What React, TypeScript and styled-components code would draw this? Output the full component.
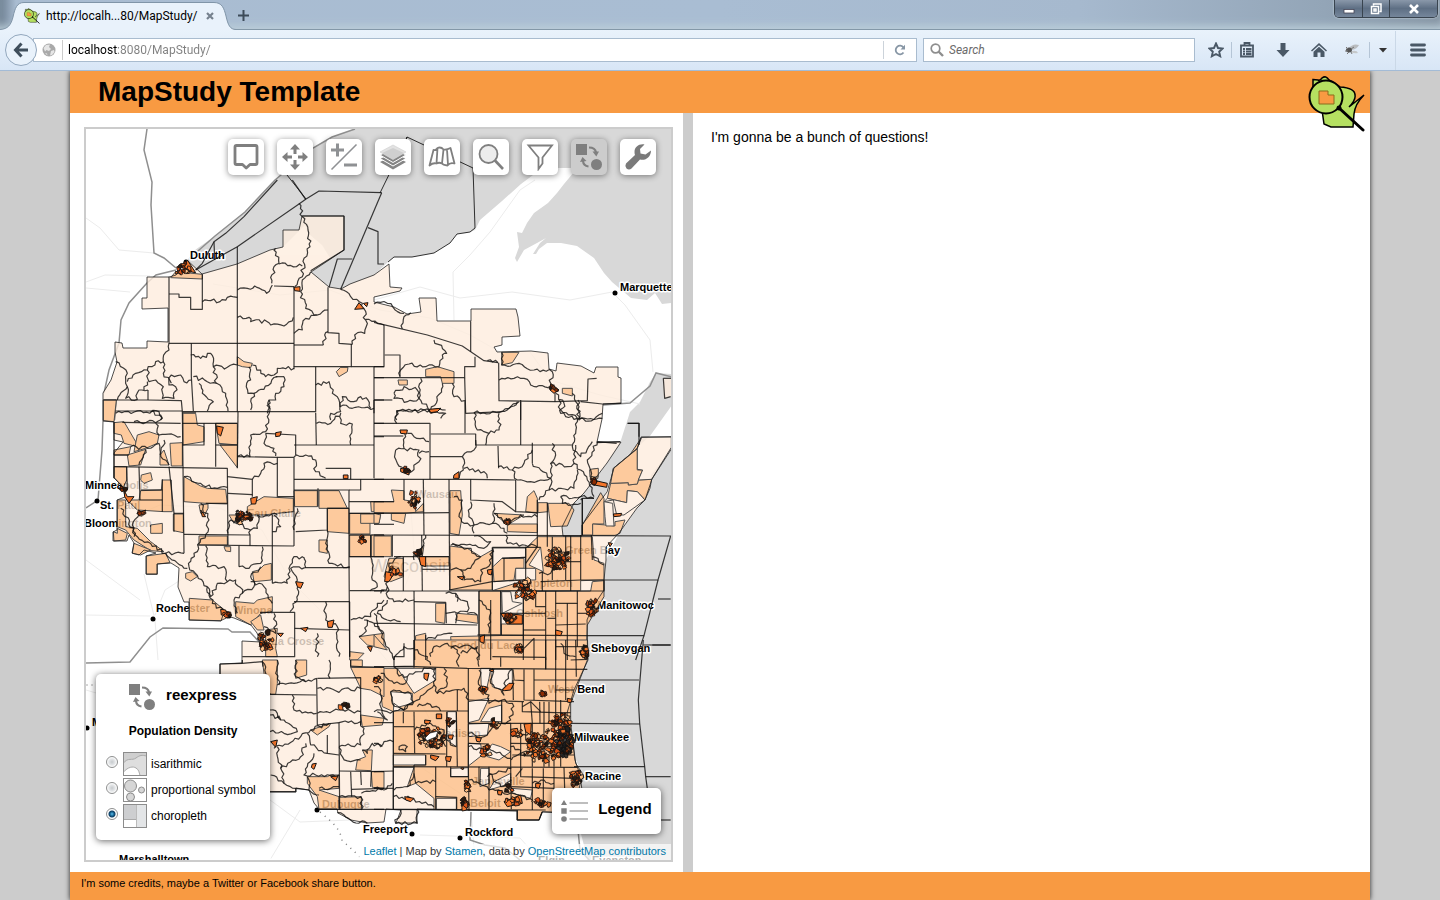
import React from "react";
import styled, { createGlobalStyle } from "styled-components";

const GlobalStyle = createGlobalStyle`
  * { box-sizing: border-box; }
  html, body { margin: 0; padding: 0; }
  body { background: #ccc; color: #000; font-family: Arial, "Liberation Sans", sans-serif; font-size: 14px; }
  button, input { font: inherit; margin: 0; }
  button { padding: 0; border: 0; background: none; cursor: pointer; }
`;

const sans = `"Liberation Sans", Arial, sans-serif`;
const chromeSans = `Roboto, "Open Sans", sans-serif`;

/* ---------- browser window ---------- */

const Screen = styled.div`
  min-height: 100vh;
  display: flex;
  flex-direction: column;
  font-family: ${sans};
`;

const TabStrip = styled.div`
  height: 30px;
  display: flex;
  align-items: stretch;
  justify-content: space-between;
  background: linear-gradient(to right, #6d7f91 0, #a9bcd1 16px, #a9bdd3 50%, #a6b9ce 75%, #93a5b7 92%, #8594a3 100%);
  box-shadow: inset 0 -1px 0 #8398a8, inset 0 -8px 8px -4px #bccfd9;
`;

const TabGroup = styled.div`
  display: flex;
  align-items: stretch;
`;

const Tab = styled.div`
  position: relative;
  width: 236px;
  padding: 2px 20px 0 24px;
  display: flex;
  align-items: center;
  gap: 6px;
  font-family: ${chromeSans};
  font-size: 12px;
`;

const TabShape = styled.svg`
  position: absolute;
  inset: 0;
`;

const TabTitle = styled.span`
  position: relative;
  flex: 1;
  white-space: nowrap;
`;

const TabIcon = styled.svg`
  position: relative;
  flex: none;
`;

const TabClose = styled.button`
  position: relative;
  width: 12px;
  height: 16px;
  display: grid;
  place-items: center;
`;

const NewTab = styled.button`
  width: 14px;
  display: grid;
  place-items: center;
`;

const WindowControls = styled.div`
  height: 18px;
  margin-right: 2px;
  display: flex;
  border: 1px solid #39444f;
  border-top: 0;
  border-radius: 0 0 5px 5px;
  overflow: hidden;
  box-shadow: 0 0 2px #dbe6f0;
`;

const WindowButton = styled.button<{ $wide?: boolean }>`
  width: ${(p) => (p.$wide ? 48 : 27)}px;
  display: grid;
  place-items: center;
  background: linear-gradient(#8a98aa, #5e6f84 50%, #75869b);
  & + & { border-left: 1px solid #39444f; }
`;

const NavBar = styled.div`
  height: 41px;
  padding-left: 5px;
  display: flex;
  align-items: center;
  background: linear-gradient(#e9f2fb, #d8e6f6);
  border-bottom: 1px solid #a3bbd6;
`;

const BackButton = styled.button`
  position: relative;
  z-index: 1;
  width: 32px;
  height: 32px;
  flex: none;
  display: grid;
  place-items: center;
  border: 1px solid #92a7bd;
  border-radius: 50%;
  background: #e9f2fb;
`;

const Field = styled.div<{ $grow?: boolean }>`
  height: 24px;
  flex: ${(p) => (p.$grow ? "1 1 0" : "0 1 272px")};
  margin-left: ${(p) => (p.$grow ? -4 : 6)}px;
  padding-left: ${(p) => (p.$grow ? 8 : 6)}px;
  min-width: 0;
  display: flex;
  align-items: center;
  border: 1px solid #a9bccf;
  background: #fff;
`;

const AddressInput = styled.input`
  flex: 1;
  min-width: 0;
  height: 20px;
  margin-left: 6px;
  padding: 0 0 0 5px;
  border: 0;
  border-left: 1px solid #ccc;
  outline: 0;
  font-family: ${chromeSans};
  font-size: 12px;
  color: #808080;
  -webkit-text-fill-color: transparent;
  background: linear-gradient(to right, #000 54px, #808080 54px);
  background-clip: text;
  -webkit-background-clip: text;
`;

const Reload = styled.button`
  width: 33px;
  height: 18px;
  display: grid;
  place-items: center;
  border-left: 1px solid #ccd3da;
`;

const SearchInput = styled.input`
  flex: 1;
  min-width: 0;
  padding: 0 5px;
  border: 0;
  outline: 0;
  font-family: ${chromeSans};
  font-size: 12px;
  font-style: italic;
  background: transparent;
  &::placeholder { color: #6b6b6b; opacity: 1; }
`;

const NavButtons = styled.div`
  margin-left: 6px;
  display: flex;
  align-items: center;
`;

const NavButton = styled.button<{ $w: number; $rule?: number }>`
  width: ${(p) => p.$w}px;
  height: ${(p) => p.$rule ?? 18}px;
  flex: none;
  display: grid;
  place-items: center;
  border-right: ${(p) => (p.$rule ? `1px solid ${p.$rule > 20 ? "#cad8e7" : "#b5c5d6"}` : "0")};
`;

/* ---------- study page ---------- */

const Page = styled.div`
  flex: 1;
  margin: 0 70px;
  display: flex;
  flex-direction: column;
  background: #fff;
  box-shadow: 0 0 5px #222;
  clip-path: inset(0 -8px);
`;

const Header = styled.header`
  height: 42px;
  padding: 0 4px 0 28px;
  display: flex;
  align-items: flex-start;
  justify-content: space-between;
  background: #f89a42;
`;

const Title = styled.h1`
  margin: 0;
  font-size: 28px;
  line-height: 42px;
`;

const Logo = styled.svg`
  position: relative;
  z-index: 1;
  margin-top: 5px;
`;

const Main = styled.main`
  flex: 1;
  display: grid;
  grid-template-columns: minmax(0, 613fr) 10px minmax(0, 677fr);
`;

const MapPane = styled.section`
  padding: 14px 10px 10px 14px;
  display: flex;
`;

const Divider = styled.div`
  background: #ccc;
`;

const Questions = styled.section`
  padding: 16px 18px;
  line-height: 16px;
  p { margin: 0; }
`;

const Footer = styled.footer`
  height: 28px;
  padding: 0 11px;
  font-size: 11px;
  line-height: 23px;
  background: #f89a42;
`;

const MapFrame = styled.div`
  position: relative;
  flex: 1;
  min-height: 735px;
  border: 2px solid #ccc;
  overflow: hidden;
`;

const MapCanvas = styled.svg`
  position: absolute;
  inset: 0;
  width: 100%;
  height: 100%;
  display: block;
`;

const Toolbar = styled.div`
  position: absolute;
  top: 10px;
  right: 15px;
  display: flex;
  gap: 13px;
`;

const Tool = styled.button<{ $active?: boolean }>`
  width: 36px;
  height: 36px;
  display: grid;
  place-items: center;
  border-radius: 5px;
  background: ${(p) => (p.$active ? "#ccc" : "#fff")};
  box-shadow: 0 1px 6px rgba(0, 0, 0, 0.45);
`;

const Panel = styled.form`
  position: absolute;
  left: 10px;
  bottom: 20px;
  width: 174px;
  height: 166px;
  padding: 10px;
  border-radius: 5px;
  background: #fff;
  box-shadow: 0 1px 7px rgba(0, 0, 0, 0.6);
`;

const PanelHead = styled.div`
  display: flex;
  justify-content: center;
  gap: 10px;
`;

const PanelTitle = styled.h2`
  margin: 0;
  font-size: 15px;
  line-height: 22px;
`;

const PanelSubtitle = styled.h3`
  margin: 12px 0;
  text-align: center;
  font-size: 12px;
  line-height: 16px;
`;

const Option = styled.label`
  height: 26px;
  display: flex;
  align-items: center;
  gap: 4px;
  font-size: 12px;
  white-space: nowrap;
`;

const Radio = styled.input`
  appearance: none;
  width: 12px;
  height: 12px;
  margin: 0 1px 4px 0;
  flex: none;
  border: 1px solid #8e8f8f;
  border-radius: 50%;
  background: radial-gradient(circle, #c6cacd 0, #e3e5e7 3px, #fff 5px);
  &:checked { background: radial-gradient(circle, #5fc0ee 0, #14618f 2px, #113f63 3px, #fff 4px); }
`;

const LegendButton = styled.button`
  position: absolute;
  right: 10px;
  bottom: 26px;
  width: 109px;
  height: 46px;
  display: flex;
  align-items: center;
  justify-content: center;
  gap: 10px;
  border-radius: 5px;
  background: #fff;
  box-shadow: 0 1px 7px rgba(0, 0, 0, 0.6);
  font-size: 15px;
  font-weight: bold;
  line-height: 20px;
  span { padding-bottom: 4px; }
`;

const Attribution = styled.div`
  position: absolute;
  right: 0;
  bottom: 0;
  padding: 0 5px 2px;
  background: rgba(255, 255, 255, 0.7);
  color: #333;
  font-size: 11px;
  line-height: 14px;
  white-space: nowrap;
  a { color: #0078a8; text-decoration: none; }
`;

/* ---------- map geometry ---------- */

const LIGHT = "#feedde";
const MID = "#fdbe85";
const HOT = "#f3762c";

function random(seed: number) {
  let s = seed;
  return () => {
    s = (s * 16807) % 2147483647;
    return s / 2147483647;
  };
}

function points(text: string): [number, number][] {
  const n = text.trim().split(/\s+/).map(Number);
  const out: [number, number][] = [];
  for (let i = 0; i + 1 < n.length; i += 2) out.push([n[i], n[i + 1]]);
  return out;
}

function line(text: string) {
  return "M" + points(text).map((p) => p.join(" ")).join("L");
}

/* A river-like boundary: every leg is broken into short uneven steps. */
function wavy(text: string) {
  const p = points(text);
  const rnd = random(Math.round(p[0][0] * 31 + p[0][1] * 17 + p.length) + 7);
  let d = `M${p[0][0]} ${p[0][1]}`;
  for (let i = 1; i < p.length; i++) {
    const [x0, y0] = p[i - 1];
    const [x1, y1] = p[i];
    const len = Math.hypot(x1 - x0, y1 - y0);
    const steps = Math.max(1, Math.round(len / 9));
    for (let k = 1; k < steps; k++) {
      const t = k / steps;
      const off = (rnd() - 0.5) * 12;
      d += `L${(x0 + (x1 - x0) * t - ((y1 - y0) / len) * off).toFixed(1)} ${(y0 + (y1 - y0) * t + ((x1 - x0) / len) * off).toFixed(1)}`;
    }
    d += `L${x1} ${y1}`;
  }
  return d;
}

type Cluster = [cx: number, cy: number, rx: number, ry: number, count: number];

interface Sheet {
  x: number;
  y: number;
  straight: string[];
  rough: string[];
  mid: string[];
  light?: string[];
  hot: string[];
  cities: Cluster[];
}

const sheets: Sheet[] = [
  {
    x: 84, y: 180,
    straight: [
      "255 290 255 490 460 490 630 490", "630 495 718 495", "460 200 460 695", "630 320 630 560",
      "355 283 355 388 320 388 320 352 285 352 285 342 255 342", "570 318 630 320",
      "732 322 732 458 765 460 765 490 805 493", "802 493 802 560 630 560 630 568", "802 560 900 560",
      "322 490 322 590 328 693", "58 660 190 660 292 662 295 695 460 695 695 695 695 560", "95 693 295 693",
      "870 560 870 700", "870 593 900 593", "870 660 900 660", "192 660 192 630", "600 590 575 590",
      "335 270 460 200 645 72", "625 0 665 58 705 33 893 38", "893 38 770 328", "852 143 882 155 882 252 900 252",
      "735 322 760 237 805 237", "390 185 392 240", "645 72 665 58", "335 270 355 250 390 185 425 160 480 110 580 0",
      "655 108 780 108 780 210 680 272",
    ],
    rough: [
      "355 365 380 362 408 365 430 352 460 352", "460 330 490 325 512 318 548 340 565 315",
      "460 412 495 412 500 425 550 425 560 435 600 438 628 412", "575 205 570 210 585 250 570 260 563 310",
      "585 252 655 258", "645 70 655 110 672 150 678 200 660 235 655 290 632 320",
      "680 275 655 300 650 335 665 385 700 405 732 390", "630 460 655 450 665 415 700 405",
      "718 495 722 465 732 455", "770 328 800 350 835 370 845 420 842 460 812 465 805 493", "845 418 900 435",
      "320 525 350 535 380 520 388 560 430 562 460 555", "388 560 398 610 370 605 328 590",
      "398 610 425 640 432 693", "345 610 355 640 388 665 370 693", "95 545 130 580 130 620 100 660",
      "130 605 155 580 190 570 215 545 238 545 255 490", "130 620 125 655 160 658 165 630 192 630",
      "190 570 195 605 215 600 238 620 235 655 270 655 275 620 255 615 262 585 290 585 300 605 322 600",
      "238 545 238 580 262 610", "190 605 180 630", "505 555 530 570 545 590 570 585 580 565 630 565",
      "495 560 500 600 488 610 492 640 510 640 540 628 580 590", "600 590 600 620 575 640 575 660 555 660 550 700",
      "510 640 500 690", "695 615 735 605 745 640 760 650 768 680 870 685",
      "768 680 775 650 800 665 830 650 852 660 860 685", "740 720 740 700 770 695 768 680", "200 695 230 705 230 720",
    ],
    mid: [
      "460 530 480 545 505 550 500 563 475 560 460 555", "58 660 97 660 92 720 58 720", "297 697 335 697 325 720 297 720",
      "757 575 770 562 792 562 790 575 765 590", "275 275 355 283 355 297 260 293",
    ],
    hot: ["310 240 335 278 318 275 300 262", "630 322 648 320 648 334 632 332", "825 368 840 386 812 388", "838 370 852 368 848 380"],
    cities: [[300, 270, 26, 18, 16]],
  },
  {
    x: 374, y: 180,
    straight: [
      "0 427 160 465 265 498 330 542 372 548", "374 548 375 662 543 665 640 662 642 597 668 595", "543 665 543 640",
      "290 424 290 515", "30 435 30 560 0 560", "32 525 78 525 78 590", "0 593 272 593 272 560 303 560 303 530",
      "272 593 275 700 385 695", "440 665 440 720", "0 660 55 660", "620 665 685 672 742 670", "868 595 895 595", "868 595 872 655 890 650",
    ],
    rough: [
      "0 372 40 370 90 400", "85 447 90 410 110 398", "78 590 80 570 105 552 155 560 195 560 205 525 218 520 180 480",
      "383 517 383 555 435 550 480 570 535 575 530 610", "375 600 420 595 460 598 470 615 530 618", "340 542 372 548",
      "385 695 405 685 435 665", "545 640 570 670 560 700 610 715", "595 640 615 680 612 718", "610 718 660 718 685 700",
      "235 610 240 650 272 662", "205 610 190 660 170 690", "140 595 135 655 165 690",
      "60 640 90 620 130 630 135 655 100 665 60 655 60 640", "68 720 68 692 150 690 215 700 200 715",
    ],
    mid: [
      "383 517 435 517 415 548 383 555", "155 568 190 560 240 575 240 610 205 610 200 590 155 590", "72 600 100 600 100 615 75 615",
      "565 625 595 625 595 648 565 640",
    ],
    hot: ["530 610 555 630 540 640 528 630", "165 690 200 685 190 695 170 700"],
    cities: [[538, 625, 10, 10, 5]],
  },
  {
    x: 84, y: 400,
    straight: [
      "295 35 297 200 300 460", "90 200 430 205 432 435", "462 35 460 205", "695 38 697 135", "635 165 635 105 545 100",
      "460 170 580 172 580 290 630 290", "580 172 630 172 630 438", "630 135 870 135", "870 0 870 235", "870 70 900 70", "870 110 900 110",
      "630 238 900 238", "630 270 795 270 795 470 797 770", "795 305 900 305", "795 340 900 340", "795 405 900 405", "795 470 900 470",
      "300 403 498 405 498 437", "340 435 630 438", "565 345 565 550", "465 437 465 500", "662 503 797 503", "630 605 797 605",
      "797 572 900 572", "635 395 730 390 730 325 795 325", "528 637 632 637 632 770 475 770", "115 67 290 70", "90 65 90 235",
      "295 70 460 70", "360 70 360 135 295 135", "395 70 395 200", "395 135 460 135", "235 238 235 335", "170 270 235 270",
      "165 300 235 300", "255 200 270 340 270 395", "270 340 300 340", "128 200 130 270", "365 310 430 310", "430 230 505 238 505 290",
      "432 280 505 284", "725 205 800 205 800 238", "830 238 830 270 795 270", "702 265 702 320", "860 405 860 470", "90 165 135 165",
      "165 200 168 300", "797 605 797 770", "632 685 797 690",
    ],
    rough: [
      "555 0 550 50 545 95 500 105 498 170 462 168", "545 100 540 130 570 145 575 168", "630 170 665 165 695 180 695 215 725 235",
      "697 70 740 70 770 40 770 70 805 72 800 135", "95 40 225 35 235 55 215 68 150 65", "505 238 530 220 540 190 580 190",
      "300 230 350 250 400 265 430 262", "350 310 375 360 365 403", "365 403 330 460 315 500 370 560",
      "365 437 370 500 420 500 430 545 400 550 380 590 370 560", "430 545 455 540 475 580 450 600 460 640",
      "475 580 510 560 500 530 530 500", "465 500 495 505 530 490 535 440", "500 545 540 560 565 610", "565 550 610 550 615 505 630 470 662 475",
      "662 503 620 505 640 540 640 600 618 635", "660 475 665 503", "730 390 725 430 735 490 797 500", "860 470 865 540 880 560 858 572",
      "800 660 860 650 880 610 900 600", "725 605 725 660 760 680 765 770", "700 700 700 770", "370 560 385 610 430 640",
      "165 330 145 375 150 410", "110 325 160 410 245 460 310 505", "245 460 300 460", "640 325 630 390", "500 390 520 385 520 345 580 345",
      "432 400 440 360 500 390 498 405", "570 345 590 380 565 395", "570 640 575 700 540 680", "215 70 225 105 290 110", "140 140 190 145 225 130 228 165",
      "185 148 165 195", "240 120 230 160 255 195", "840 660 870 670 900 700", "850 660 840 700 825 710",
    ],
    mid: [
      "58 0 97 0 90 65 58 62", "90 68 120 65 155 125 160 140 120 130 112 105 90 100", "150 155 185 145 220 130 225 105 195 95 160 105",
      "90 150 140 140 135 165 90 165", "130 165 185 148 170 195 135 198", "90 200 128 200 128 240 118 262 90 232",
      "297 40 335 40 340 75 360 80 360 125 297 135", "395 70 460 70 460 135 405 130", "408 135 460 135 460 203", "228 165 240 150 255 195 228 195",
      "258 130 295 128 295 198 262 198", "172 225 200 218 205 240 180 250 170 240",
      "170 272 232 270 235 240 262 240 265 335 240 335 160 330 130 300 165 300", "300 230 350 258 370 265 425 268 430 312 365 310 300 305",
      "345 315 372 312 372 325 362 345 350 340", "345 408 430 408 430 435 345 435", "268 342 298 342 298 398 268 392",
      "100 300 125 300 125 380 160 385 200 425 240 455 200 452 150 420 125 390 100 380", "100 385 130 400 125 420 90 423 88 395 100 400",
      "150 430 200 450 170 465 145 460", "187 468 245 460 258 488 220 492 220 523 187 523", "305 520 325 515 340 530 320 543 305 535",
      "316 595 385 600 415 625 440 648 410 662 316 660", "455 605 510 610 520 600 565 590 565 635 530 640 500 675 455 650",
      "505 515 525 510 540 495 562 490 562 540 510 545", "420 440 440 440 440 455 425 453", "630 272 700 272 700 320 632 320",
      "705 272 765 272 790 325 705 325", "730 325 795 325 795 400 730 395", "705 420 730 420 730 460 705 455",
      "490 320 540 290 628 295 628 335 580 340 540 345 490 345", "435 345 460 345 450 370", "797 340 858 340 858 402 797 402",
      "830 342 890 342 885 370 830 370", "860 305 900 305 900 335 862 335", "797 405 860 405 860 470 797 470", "862 405 900 405 900 470 862 470",
      "825 710 900 700 900 745 850 735", "797 755 840 760 820 780 797 780", "545 690 580 685 575 745 580 770 545 770",
      "500 665 530 645 540 690 520 690", "200 375 235 370 235 400 200 400",
    ],
    hot: [
      "398 78 418 82 410 108 400 100", "575 98 592 95 588 108 575 110", "120 270 130 290 150 290 135 310 122 290", "160 340 185 330 180 345",
      "778 225 792 225 792 236 778 236", "500 295 520 290 515 312 502 312", "635 545 658 548 650 565 640 560", "350 330 365 350 355 350",
      "410 628 425 630 430 645 412 645", "730 665 750 660 745 682 732 682", "650 685 672 682 665 695", "580 700 598 700 590 710", "850 740 865 740 860 755",
    ],
    cities: [[478, 350, 30, 22, 26], [545, 728, 22, 34, 34], [835, 416, 9, 12, 8], [118, 268, 12, 10, 6], [172, 338, 12, 6, 5], [430, 642, 12, 8, 8]],
  },
  {
    x: 374, y: 400,
    straight: [
      "0 70 168 70 168 238", "170 102 305 102 305 135 595 135", "0 108 88 108", "168 170 265 170", "273 0 273 100", "440 0 440 135", "372 138 374 205",
      "0 238 290 238 425 240", "290 238 290 300 385 305 425 335", "90 238 90 300", "148 238 150 405", "225 238 227 570", "425 240 425 335 490 338",
      "0 340 225 338", "0 373 60 373", "0 405 890 408 852 540 690 540", "490 300 490 440", "0 305 60 305", "475 128 475 190", "355 442 500 442", "385 475 455 472",
      "0 573 690 573 690 540", "620 405 620 540 690 540", "500 545 620 540", "545 573 545 780", "515 573 515 780", "448 573 448 780",
      "315 573 315 780", "120 573 122 780", "0 670 60 670 310 675", "310 705 635 707 810 707 852 540", "810 707 785 780", "382 640 448 640",
      "380 573 382 705", "448 690 515 690", "60 470 225 470", "55 405 55 470", "143 405 145 573", "88 470 88 573", "120 605 215 607 217 670",
      "545 675 635 672", "485 573 485 620 515 620", "580 610 580 780", "545 610 610 610 610 573", "610 610 610 740", "450 745 480 715 480 780", "590 408 590 573",
      "390 475 390 540", "225 570 355 545 450 540", "355 442 355 570", "350 600 350 780", "155 705 155 780", "610 640 640 640",
      "652 405 655 480", "625 295 625 405", "762 70 795 70 795 110",
      "852 597 890 597", "835 735 890 735", "145 508 225 508", "520 308 520 440", "535 410 535 540", "575 408 575 540", "455 440 455 573", "505 515 505 573",
      "490 440 455 490", "560 485 620 485", "450 640 515 640", "520 655 545 655", "545 740 635 740", "670 125 728 130",
      "620 300 625 295 660 295",
    ],
    rough: [
      "555 0 560 30 610 55 605 100 595 140 620 170 655 125", "612 0 615 60 685 55", "670 125 640 180 650 230", "265 170 300 150 305 120",
      "265 170 268 210 255 235", "270 205 330 215 340 235", "415 210 430 240 470 245 500 240 530 235 500 210 475 190",
      "372 200 415 210 450 190 475 150", "535 130 545 165 530 190 580 200 600 190 605 135", "530 190 530 235 525 270 495 300",
      "525 270 600 265 610 210", "600 190 620 210 640 240 660 290", "560 290 620 290 660 295", "560 290 565 310 620 310",
      "240 290 265 300 255 350 270 370 300 375 300 400", "290 305 285 340 300 375 355 370 360 310", "360 340 400 370 440 345 490 350",
      "300 38 310 90 345 100 335 135", "300 38 375 38 405 25 430 5", "345 100 375 90 375 40", "65 150 135 150 135 185 105 220 70 190 65 150",
      "80 95 95 110 90 145", "68 70 68 35 215 30", "100 100 120 110 165 125", "135 160 165 155", "20 580 40 560 45 490 80 470", "40 600 10 640 40 660 80 665",
      "40 560 40 590 60 605 120 600", "120 480 125 460 150 430 155 405", "230 435 280 445 320 470 290 505 230 510",
      "260 510 270 540 320 545 320 510 350 490 355 445", "300 408 350 425 330 445 235 430", "395 405 400 430 490 440",
      "215 580 245 580 260 600 280 605 280 635 250 640 215 640", "280 640 310 645", "245 580 250 605", "245 640 245 670", "155 720 200 705 235 700",
      "60 780 90 740 120 745", "230 745 280 735 310 745", "655 470 690 495", "0 640 30 720 60 780", "355 370 390 385 400 400",
      "495 520 530 520 560 500", "315 600 350 640 345 700",
    ],
    mid: [
      "228 272 260 272 265 345 255 405 228 400", "455 335 460 290 480 272 490 295 490 340", "525 340 522 310 585 310 600 330 580 378 530 380",
      "492 308 520 308 522 335 492 338", "360 340 450 345 400 375", "400 372 490 372 490 398 400 395",
      "647 210 670 205 672 235 650 235",
      "52 270 90 272 90 300 125 305 125 335 148 310 148 335 90 340 0 338 0 305 60 305", "52 340 95 340 90 370 52 360", "0 340 20 345 15 370 0 370",
      "0 408 52 408 52 470 0 470", "125 460 150 435 145 470 225 470 225 498 145 498", "45 475 88 475 88 530 50 545 30 530",
      "228 438 280 445 320 470 355 450 355 570 228 570", "355 475 450 475 450 505 425 505 420 540 360 545",
      "492 410 655 410 660 480 690 490 690 540 620 542 620 572 355 572 455 540 455 445", "315 573 380 573 380 705 315 705",
      "448 575 650 573 655 545 690 542 690 590 640 675 635 780 448 780", "185 610 215 610 212 670 185 665", "250 640 310 645 312 670 245 660",
      "125 707 155 700 155 780 122 780", "230 710 448 705 448 780 235 780", "382 672 448 672 448 706 382 706", "0 705 40 750 0 740", "160 750 220 735 225 780 160 780",
    ],
    light: ["465 495 500 442 508 515", "383 575 410 575 415 605 445 610 385 640", "425 505 485 505 485 540 425 540", "357 444 455 444 455 472 385 474 357 500"],
    hot: [
      "380 640 445 645 445 672 400 672", "340 510 355 508 352 525 342 522",
      "80 205 105 210 105 225 80 215", "390 360 410 362 405 375 390 370", "135 470 155 470 155 500 140 495", "35 515 60 520 45 545 32 545",
      "545 690 565 695 560 707 545 705", "318 710 332 705 330 730 318 725", "165 28 200 25 190 35 170 38",
      "78 90 100 90 98 102 80 100", "250 530 270 530 265 540", "240 225 255 215 255 235 238 235",
    ],
    cities: [
      [120, 302, 16, 28, 26], [548, 475, 36, 34, 60], [452, 570, 34, 30, 56], [408, 657, 16, 12, 22], [652, 622, 20, 24, 24], [62, 512, 20, 16, 12],
      [435, 747, 10, 12, 12], [630, 762, 10, 18, 16], [400, 365, 10, 8, 8], [130, 462, 10, 10, 6], [95, 212, 14, 8, 7],
    ],
  },
  {
    x: 374, y: 640,
    straight: [
      "0 80 125 80 280 85 640 88", "120 0 120 78 60 80 60 50 90 50 90 10", "355 50 515 52 515 88", "380 52 380 80", "450 88 450 180 600 185", "480 88 480 180", "515 0 515 88",
      "545 0 545 250", "575 0 575 180", "605 0 607 110", "480 120 795 120", "808 0 793 180 797 250 812 380 815 410 822 460", "808 15 890 15",
      "815 410 890 410", "590 250 797 252", "600 380 812 380", "283 85 283 380 285 512", "90 213 283 213", "283 180 450 185",
      "383 180 383 250 410 250 410 380", "0 248 58 248 58 508", "58 213 58 250", "58 340 215 342", "58 380 610 382", "120 215 122 340",
      "88 215 88 250", "218 215 218 380", "247 215 250 380", "0 395 58 393", "155 345 155 375 120 375", "0 508 515 510", "185 380 185 508",
      "185 470 248 472 248 508", "230 380 230 410 283 410", "120 375 120 400 125 430", "345 380 345 510", "315 380 315 430", "410 380 412 508",
      "440 250 440 410 600 415", "475 385 475 510", "508 385 508 480", "540 382 540 480", "570 382 572 445", "283 250 590 250", "475 250 475 380",
      "510 185 510 380", "410 310 600 312", "412 440 540 445", "445 185 445 215 545 218", "415 345 600 345", "545 218 590 218", "250 150 250 213",
      "430 510 430 540 495 540 505 515", "60 260 120 260", "183 300 215 300", "545 150 600 150", "825 540 890 540", "0 445 58 445", "283 310 345 312",
      "417 88 420 120 450 122", "417 120 418 180", "497 185 498 250", "525 185 525 250", "445 200 470 185 500 215", "470 185 475 250", "560 180 560 250",
      "590 60 640 58", "485 320 540 320 540 380", "455 250 455 300", "525 345 525 380", "560 345 560 380", "425 410 445 385",
    ],
    rough: [
      "60 80 70 100 100 110 95 130", "100 110 160 85 185 85 180 135 120 185 90 210", "210 85 220 130 190 160 180 135", "190 160 270 145 283 180",
      "0 215 40 215 90 210", "0 140 20 150 20 200 40 240 10 215", "50 155 110 160 118 185 90 210 55 190 50 155",
      "315 90 320 140 345 165 345 190 383 180",
      "355 85 350 130 390 165 390 130 415 88", "383 180 415 190 410 240 383 250",
      "120 30 160 50 170 75", "170 50 180 20 220 10 250 30 255 80", "260 40 310 20 315 80", "283 320 350 330 410 355",
      "283 280 330 290 350 270 383 250", "0 310 20 320 30 305 58 305", "60 450 100 440 120 400", "125 430 185 425", "0 445 30 450 55 430",
      "58 470 110 475 180 500", "345 400 380 440 412 420", "285 420 315 430 345 450", "345 450 420 460 475 480", "340 410 412 385",
      "218 300 247 320", "75 330 85 315 100 320 95 335 75 330", "122 270 160 250 210 270 215 320",
      "410 280 440 290 475 275", "412 360 440 340 475 330", "475 430 510 420 540 430", "20 100 60 130 95 130",
      "130 200 160 190 200 213", "80 510 65 550 130 550 130 508", "560 10 570 40 605 50", "410 320 440 330 440 345 480 350",
    ],
    mid: [
      "120 0 640 0 640 60 590 190 590 250 605 370 625 400 600 520 505 515 495 540 430 540 430 512 58 508 58 215 25 200 20 150 0 140 0 85 120 85",
    ],
    light: [
      "320 85 350 85 345 115 335 160 322 150", "350 88 415 88 415 145 385 150 355 140", "283 185 345 175 315 240 283 248", "320 245 345 205 383 195 383 245",
      "335 335 355 312 380 320 410 335 375 360 340 350",
      "412 445 475 450 470 475 415 460", "345 450 360 425 410 400 410 430", "220 215 247 215 247 320 218 300", "230 385 283 383 283 410 230 410",
      "58 345 155 345 155 375 58 375", "187 475 247 475 247 508 187 508", "58 382 120 382 100 440 125 430 180 475 180 508 58 508",
      "70 85 185 85 185 120 120 160 100 130", "50 155 115 160 115 190 60 205", "283 252 345 250 340 285 283 290",
      "283 310 320 312 325 345 283 378", "160 290 175 278 190 285 178 298", "60 190 90 212 58 213", "320 385 345 385 345 430 318 440",
    ],
    hot: [
      "150 100 165 100 160 122 150 115", "92 470 120 475 110 485 95 480", "187 222 203 222 203 236 187 236", "152 240 170 242 165 252 152 250",
      "222 285 238 285 235 298 224 296", "215 350 232 350 228 365 216 362", "170 345 195 350 185 362 170 355", "370 452 385 452 382 465 372 464",
      "0 112 20 115 15 125 0 122", "485 430 500 430 495 445 485 442", "390 485 440 465 445 490 400 500", "580 175 595 178 590 188 580 186",
      "345 90 360 88 355 96", "260 384 270 384 266 390", "305 292 322 294 318 306 308 304", "450 252 472 250 470 285 455 275",
      "410 268 430 265 435 285 415 290", "385 150 405 130 420 130 410 150 392 152",
    ],
    cities: [
      [555, 290, 40, 64, 90], [572, 305, 24, 44, 190], [490, 312, 34, 34, 56], [500, 345, 60, 24, 30], [606, 415, 18, 24, 40], [172, 292, 42, 34, 90], [228, 248, 14, 10, 8],
      [279, 437, 12, 14, 14], [274, 490, 10, 16, 16], [326, 150, 9, 11, 10], [505, 160, 10, 9, 10], [435, 26, 10, 12, 14], [360, 252, 14, 14, 12],
      [335, 335, 14, 20, 12], [420, 484, 26, 12, 14], [500, 490, 30, 12, 16], [630, 38, 10, 18, 18], [565, 238, 26, 20, 20], [430, 280, 18, 14, 8], [406, 446, 12, 12, 6],
    ],
  },
  {
    x: 84, y: 660,
    straight: [
      "475 10 408 12 408 60", "475 0 475 10 535 5 537 20", "558 103 697 105", "698 55 700 195 765 188 767 450", "700 55 830 53 830 195", "800 0 800 20 900 22",
      "765 333 900 335", "800 335 803 410", "830 335 832 375", "862 335 860 380", "730 225 730 280 765 285", "803 388 900 385",
      "558 395 635 395 635 385 675 390", "705 448 900 448",
    ],
    rough: [
      "580 75 630 70 665 65 698 55", "535 5 545 40 558 103", "580 0 575 40 585 75", "635 0 635 50 665 65", "735 0 738 55", "625 105 630 150 698 160", "700 160 765 150 830 155",
      "700 85 755 92 830 85", "558 165 600 180 640 215 600 220 558 215", "570 265 650 230 680 210 735 190", "670 220 680 255 730 280",
      "590 325 650 290 665 250", "580 260 590 325 600 370 635 385", "690 280 670 320 660 345 765 345", "765 260 830 255 840 205 830 185 765 188",
      "835 270 850 280 865 250 895 260", "765 262 775 290 800 305 830 300", "560 345 600 370", "765 410 830 410 832 450", "832 400 900 385",
      "670 350 675 390 705 405", "705 385 765 380", "760 458 780 465 800 480 850 490", "558 150 580 160 590 180",
    ],
    mid: [
      "535 0 580 0 580 70 575 103 558 103 540 40", "635 0 668 0 668 45 635 55", "800 22 900 22 900 110 860 90 830 85", "800 0 835 0 835 20 800 18",
      "680 210 740 190 735 200 700 225", "815 330 820 300 845 290 835 270 865 270 862 332", "862 335 900 335 900 385 865 382",
      "670 350 730 350 740 345 765 345 765 385 705 390 765 410 765 448 705 448 700 410 670 370", "830 165 900 175 895 195 835 200",
      "765 412 832 410 832 448 768 448",
    ],
    hot: ["685 312 697 310 690 328 682 322", "740 350 762 348 755 362", "560 245 580 240 575 262"],
    cities: [[780, 137, 16, 6, 6], [882, 55, 12, 12, 10]],
  },
  {
    x: 550, y: 420,
    straight: ["232 10 267 10 267 75", "97 235 97 345", "140 68 210 65"],
    rough: [],
    mid: [
      "275 52 262 85 190 145 182 190 235 188 235 195 262 192 265 180 305 178 300 205 285 240 262 215 232 212 230 248 172 235 182 190",
      "262 85 262 150 278 150 265 180 262 192 235 195 235 188 182 190 190 145",
      "97 315 152 218 162 235 162 312 128 312 128 345 97 345",
      "128 312 168 315 195 318 195 305 225 300 210 340 195 346 128 346",
      "120 148 145 145 145 170 120 172",
    ],
    light: [
      "275 52 364 50 364 82 305 178 265 180 278 150 262 148 262 85",
      "162 245 190 240 200 285 222 285 285 240 262 215 232 212 230 248 172 235",
      "162 245 188 250 192 318 168 318 165 290",
    ],
    hot: ["128 180 172 190 170 202 128 194", "190 282 215 280 212 288 192 290", "175 368 187 370 180 380"],
    cities: [[132, 182, 12, 12, 9]],
  },
];

const stateOutline =
  "169 277 147 277 147 298 142 298 142 309 168 308 168 342 147 341 147 348 123 348 122 343 115 342 115 352 117 362 111 380 103 393 103 421 114 422 114 440 123 442 114 453 114 478 123 487 125 497 117 500 117 530 113 532 113 541 127 541 129 535 134 543 132 553 139 555 144 550 156 553 146 556 146 574 157 574 157 564 171 563 179 568 178 587 184 602 189 602 189 620 221 621 223 615 234 618 251 625 257 633 261 642 242 641 242 663 220 664 220 680 250 792 296 792 296 788 309 790 314 803 319 809 337 809 338 813 351 820 367 823 384 822 386 809 401 810 396 823 417 823 417 809 471 810 517 811 517 820 539 820 542 812 574 813 582 790 580 775 575 760 572 737 567 713 574 690 588 660 587 620 592 608 604 590 604 580 606 560 606 547 619 533 637 508 645 500 652 479 672 448 672 437 641 437 637 449 614 468 607 492 582 525 582 536 563 536 562 527 574 503 584 493 594 480 607 463 621 442 597 442 602 419 603 404 621 403 621 378 618 377 618 367 596 367 594 373 581 366 557 363 556 371 549 369 548 353 531 351 497 352 494 347 502 345 502 337 520 336 518 317 516 309 471 309 471 321 437 321 436 298 419 298 421 312 407 314 394 307 374 302 374 297 400 291 402 288 390 287 389 264 374 275 350 284 341 289 329 287 311 272 344 250 344 216 302 216 299 230 283 230 283 247 270 250 237 264 202 274 187 260 176 275";

const superior =
  "186 262 195 250 215 236 232 222 245 212 275 180 313 148 332 137 355 129 672 129 672 303 662 304 655 293 647 300 631 298 612 282 604 273 594 258 577 246 561 243 547 243 539 249 536 254 533 254 540 243 546 238 537 243 524 250 517 262 515 258 519 247 517 232 522 233 527 223 534 213 548 203 557 193 564 184 574 172 577 168 553 168 533 175 521 184 502 201 480 220 475 230 467 233 457 234 450 243 434 253 412 257 394 257 388 262 374 275 351 284 341 289 329 287 311 272 330 258 322 245 310 235 305 225 283 247 270 250 237 264 202 274 188 262";

const michigan =
  "672 374 656 373 650 382 640 402 630 412 621 440 607 463 594 480 584 493 574 503 562 527 563 536 582 536 582 525 605 495 614 468 650 436 672 405 672 448 651 475 650 485 637 508 619 533 606 560 604 590 587 620 588 660 574 690 567 713 572 737 576 760 582 775 578 795 580 830 588 861 672 861";

const lakeLines = ["475 228 473 168 407 137 403 146 380 193", "407 137 403 150", "287 175 306 199", "475 228 470 232 457 234 450 243 434 253 412 257 394 257 388 262"];

const roads = [
  "147 129 144 150 152 182 151 205 154 253 164 258 176 268",
  "355 129 332 137 313 148 275 180 245 212 215 236 190 258",
  "104 393 109 370 119 343 121 320 129 303 147 283 156 275 176 270",
  "103 421 102 450 98 500 86 508",
  "86 663 130 662 150 637 163 628 228 629 232 632 250 632 262 645",
  "603 405 630 403 650 386 656 373 672 377",
  "471 812 470 840 485 845 505 848 520 860",
  "578 830 580 850 590 861",
];

const faintRoads = [
  "86 218 100 228 119 250 154 253", "86 282 105 275 150 276", "86 288 130 292", "213 284 280 295 330 290 380 310 430 318 470 335 500 352",
  "530 352 550 380 600 395 640 404", "454 320 453 272 470 255 490 232 520 190 535 180", "374 300 420 287 460 298 512 292 570 300 612 292 625 305 650 340 653 372",
  "120 522 160 505 220 508 262 530 290 580 330 620 370 640 420 700 440 740", "410 500 415 560 400 600", "520 575 550 640 575 700", "144 574 155 620 158 660",
  "86 615 150 616", "270 800 300 822 350 820", "270 860 300 810", "410 760 470 800 475 860", "500 700 540 760 575 780", "86 690 120 700", "420 835 520 838 540 860",
  "190 574 165 590 155 615", "86 560 140 600",
];

interface Place { name: string; x: number; y: number; dot?: [number, number] }

const places: Place[] = [
  { name: "Duluth", x: 190, y: 259, dot: [186, 262] },
  { name: "Marquette", x: 620, y: 291, dot: [615, 293] },
  { name: "Minneapolis", x: 85, y: 489 },
  { name: "St. Paul", x: 100, y: 509, dot: [97, 501] },
  { name: "Bloomington", x: 84, y: 527 },
  { name: "Rochester", x: 156, y: 612, dot: [153, 619] },
  { name: "Winona", x: 233, y: 614, dot: [229, 616] },
  { name: "La Crosse", x: 271, y: 645 },
  { name: "Eau Claire", x: 247, y: 517 },
  { name: "Wausau", x: 416, y: 498 },
  { name: "Green Bay", x: 565, y: 554 },
  { name: "Appleton", x: 525, y: 587 },
  { name: "Manitowoc", x: 597, y: 609 },
  { name: "Oshkosh", x: 516, y: 617 },
  { name: "Fond du Lac", x: 450, y: 649 },
  { name: "Sheboygan", x: 591, y: 652 },
  { name: "West Bend", x: 548, y: 693 },
  { name: "Milwaukee", x: 574, y: 741 },
  { name: "Madison", x: 436, y: 737 },
  { name: "Racine", x: 585, y: 780 },
  { name: "Janesville", x: 472, y: 785 },
  { name: "Beloit", x: 470, y: 807 },
  { name: "Dubuque", x: 322, y: 808, dot: [317, 810] },
  { name: "Freeport", x: 363, y: 833, dot: [412, 834] },
  { name: "Rockford", x: 465, y: 836, dot: [460, 838] },
  { name: "Elgin", x: 538, y: 864 },
  { name: "Evanston", x: 592, y: 864 },
  { name: "Marshalltown", x: 119, y: 863 },
  { name: "Cedar Rapids", x: 235, y: 868 },
  { name: "M", x: 92, y: 726, dot: [87, 728] },
];

function CityTracts({ at }: { at: Cluster }) {
  const [cx, cy, rx, ry, count] = at;
  const rnd = random(cx * 13 + cy * 7 + count);
  const shades = count > 150
    ? [HOT, "#8c2d04", "#3a332f", "#2b2b2b", "#444", "#222"]
    : [MID, HOT, HOT, "#d9541a", "#8c2d04", "#2b1a10"];
  const tracts: React.ReactNode[] = [];
  for (let i = 0; i < count; i++) {
    const a = rnd() * Math.PI * 2;
    const r = Math.pow(rnd(), 0.7);
    const x = cx + Math.cos(a) * r * rx;
    const y = cy + Math.sin(a) * r * ry;
    const size = 3 + rnd() * 6;
    let d = "";
    for (let k = 0; k < 5; k++) {
      const t = (k / 5) * Math.PI * 2 + rnd();
      const q = size * (0.6 + rnd() * 0.7);
      d += `${k ? "L" : "M"}${(x + Math.cos(t) * q).toFixed(1)} ${(y + Math.sin(t) * q).toFixed(1)}`;
    }
    tracts.push(<path key={i} d={d + "Z"} fill={shades[Math.floor(rnd() * shades.length)]} />);
  }
  return <g stroke="#111" strokeWidth={2.6}>{tracts}</g>;
}

function sheetTransform(s: Sheet) {
  return `translate(${s.x} ${s.y}) scale(0.33333)`;
}

function WisconsinMap() {
  return (
    <MapCanvas viewBox="86 129 585 731" preserveAspectRatio="xMidYMid slice" role="img" aria-label="Population density of Wisconsin by census tract">
      <rect x="-400" y="-400" width="1600" height="1800" fill="#fff" />
      <path d={line(superior) + "Z"} fill="#d8d8d8" />
      <path d={line(michigan) + "Z"} fill="#d8d8d8" />
      <g fill="none" stroke="#ececec">{faintRoads.map((r) => <path key={r} d={line(r)} />)}</g>
      <g fill="none" stroke="#8f8f8f" strokeWidth={1.5}>{roads.map((r) => <path key={r} d={line(r)} />)}</g>
      <path d="M320 812C332 822 340 828 342 840C350 848 356 852 362 860" fill="none" stroke="#777" strokeDasharray="1 5" strokeWidth={1.5} />
      <path d="M86 685h10" stroke="#aaa" strokeDasharray="2 3" />
      <text x="370" y="572" fontFamily="Liberation Sans" fontSize="18" fill="#444">Wisconsin</text>
      <g fontFamily="Liberation Sans" fontWeight="bold" fontSize="11" stroke="#fff" strokeWidth={3} paintOrder="stroke" strokeLinejoin="round">
        {places.map((p) => <text key={p.name} x={p.x} y={p.y}>{p.name}</text>)}
      </g>
      {places.map((p) => p.dot && <circle key={p.name} cx={p.dot[0]} cy={p.dot[1]} r={2.5} />)}
      <g opacity={0.8}>
        <path d={line(stateOutline) + "Z"} fill={LIGHT} />
        <path d="M663 378H672V396L664 399Z" fill={LIGHT} />
        {sheets.map((s, i) => (
          <g key={i} transform={sheetTransform(s)} stroke="#222" strokeWidth={3}>
            {s.mid.map((m) => <path key={m} d={line(m) + "Z"} fill={MID} />)}
            {s.light?.map((m) => <path key={m} d={line(m) + "Z"} fill={LIGHT} />)}
          </g>
        ))}
      </g>
      <path d={line(stateOutline) + "Z"} fill="none" stroke="#222" strokeOpacity={0.8} />
      <g fill="none" stroke="#111" strokeOpacity={0.85}>{lakeLines.map((l) => <path key={l} d={line(l)} />)}</g>
      {sheets.map((s, i) => (
        <g key={i} transform={sheetTransform(s)} fill="none" stroke="#111" strokeOpacity={0.82} strokeWidth={3.6} strokeLinejoin="round">
          {s.straight.map((l) => <path key={l} d={line(l)} />)}
          {s.rough.map((l) => <path key={l} d={wavy(l)} />)}
        </g>
      ))}
      {sheets.map((s, i) => (
        <g key={i} transform={sheetTransform(s)}>
          <g fill={HOT} stroke="#111" strokeWidth={3}>{s.hot.map((h) => <path key={h} d={line(h) + "Z"} />)}</g>
          {s.cities.map((c) => <CityTracts key={c.join()} at={c} />)}
        </g>
      ))}
      <path d="M425 738L430 733L438 731L436 737L431 739L427 741Z" fill="#fff" stroke="#222" strokeWidth={0.8} />
    </MapCanvas>
  );
}

/* ---------- icons ---------- */

const GREY = "#7f7f7f";

function ReexpressIcon() {
  return (
    <svg width="27" height="27" viewBox="0 0 27 27" fill={GREY} aria-hidden="true">
      <rect x="0" y="0" width="11" height="11" />
      <circle cx="20.5" cy="20.5" r="5.5" />
      <path d="M13 3.5C17 3.5 19.5 5.5 20 8.5" fill="none" stroke={GREY} strokeWidth="2.2" />
      <path d="M16.5 7.5H23L20.3 12.5Z" />
      <path d="M12.5 22.5C9 22 7.3 20.3 7 17" fill="none" stroke={GREY} strokeWidth="2.2" />
      <path d="M4 18L6.5 13L10.5 17Z" />
    </svg>
  );
}

const toolIcons: { label: string; active?: boolean; icon: React.ReactNode }[] = [
  {
    label: "retrieve",
    icon: (
      <svg width="28" height="28" viewBox="0 0 28 28" fill="none" stroke={GREY} strokeWidth="2.8" strokeLinejoin="round">
        <path d="M4.5 2.5H23.5Q25 2.5 25 4V20Q25 21.5 23.5 21.5H18L14.2 25L10.5 21.5H4.5Q3 21.5 3 20V4Q3 2.5 4.5 2.5Z" />
      </svg>
    ),
  },
  {
    label: "pan",
    icon: (
      <svg width="26" height="26" viewBox="0 0 26 26" fill={GREY}>
        <path d="M13 0L18 5.5H14.5V10H11.5V5.5H8ZM13 26L18 20.5H14.5V16H11.5V20.5H8ZM0 13L5.5 8V11.5H10V14.5H5.5V18ZM26 13L20.5 8V11.5H16V14.5H20.5V18Z" />
      </svg>
    ),
  },
  {
    label: "zoom",
    icon: (
      <svg width="28" height="28" viewBox="0 0 28 28" fill="none" stroke="#8f9194">
        <path d="M1.5 26.5L26.5 1.5" strokeWidth="1.6" />
        <path d="M1 7H14M7.5 .5V13.500M14 22H27" strokeWidth="3" />
      </svg>
    ),
  },
  {
    label: "overlay",
    icon: (
      <svg width="28" height="28" viewBox="0 0 28 28">
        <path d="M1 19L14 12.500L27 19L14 26.500Z" fill="#858585" />
        <path d="M1 15.500L14 9L27 15.500L14 23Z" fill="#858585" stroke="#fff" strokeWidth="1" />
        <path d="M1 12L14 5.500L27 12L14 19.500Z" fill="#858585" stroke="#fff" strokeWidth="1" />
        <path d="M1 9L14 2L27 9L14 16.500Z" fill="#e2e2e2" stroke="#cfcfcf" strokeWidth=".6" />
        <path d="M3 10L14 5L25 10L14 16.500Z" fill="#cfcfcf" />
      </svg>
    ),
  },
  {
    label: "basemap",
    icon: (
      <svg width="28" height="28" viewBox="0 0 28 28" fill="none" stroke={GREY} strokeWidth="1.800" strokeLinejoin="round">
        <path d="M5.500 7Q8 7.500 9.500 5Q13 3.500 15.500 6.500Q19 7 22.500 5L26.500 20.500Q22 19 19.500 22.500Q15 22 14 20.500Q11 19 8.500 20.500Q5 19.500 1.500 22.500ZM9.500 5L8.500 20.500M15.500 6.500L14 20.500M19 6.500L20 22" />
      </svg>
    ),
  },
  {
    label: "search",
    icon: (
      <svg width="28" height="28" viewBox="0 0 28 28" fill="none" stroke={GREY}>
        <circle cx="11.500" cy="11" r="9" strokeWidth="1.800" fill="#ededed" />
        <path d="M18 17.500L26 26" strokeWidth="2.600" />
      </svg>
    ),
  },
  {
    label: "filter",
    icon: (
      <svg width="28" height="28" viewBox="0 0 28 28" fill="none" stroke={GREY} strokeWidth="1.800">
        <path d="M2.500 2.500H26L16.500 14.500V20.500L12.500 26V14.500Z" />
      </svg>
    ),
  },
  { label: "reexpress", active: true, icon: <ReexpressIcon /> },
  {
    label: "settings",
    icon: (
      <svg width="28" height="28" viewBox="0 0 28 28" fill="#7a7a7a">
        <path d="M20.500 1.500C15 .5 10.500 4 10.500 9Q10.500 11 11 12L2 20.500Q.5 23 2.500 25.500Q5 27.500 7.500 25.500L16 16.500C21.500 18 27 14 27 7.500L21.500 11.500L16.500 10.500L16 6Z" />
      </svg>
    ),
  },
];

function Thumb({ kind }: { kind: string }) {
  return (
    <svg width="24" height="24" viewBox="0 0 24 24" stroke="#8c8c8c" aria-hidden="true">
      {kind === "isarithmic" && (
        <>
          <rect x=".5" y=".5" width="23" height="23" fill="#cfcfcf" />
          <path d="M.5 11C5 5 9 9 13 6S19 3 23.500 4V23.500H.5Z" fill="#dedede" stroke="#aaa" />
          <path d="M.5 20C5 15 10 14 13 16S16 20 17 23.500H.5Z" fill="#fff" stroke="#aaa" />
        </>
      )}
      {kind === "proportional symbol" && (
        <>
          <rect x=".5" y=".5" width="23" height="23" fill="#fff" />
          <circle cx="7.500" cy="8" r="6" fill="#d6d6d6" />
          <circle cx="18.500" cy="12" r="3" fill="#d6d6d6" />
          <circle cx="7.500" cy="19" r="4" fill="#d6d6d6" />
        </>
      )}
      {kind === "choropleth" && (
        <>
          <rect x=".5" y=".5" width="23" height="23" fill="#fff" />
          <path d="M.5 .5H13.500V15.500H.5Z" fill="#cdced0" stroke="#aaa" />
          <path d="M13.500 .5H23.500V23.500H13.500Z" fill="#e3e5e7" stroke="#bbb" />
        </>
      )}
      <rect x=".5" y=".5" width="23" height="23" fill="none" />
    </svg>
  );
}

function LogoArt() {
  return (
    <>
      <path d="M5 3.500L10 4Q12 5 14 2Q18-1 21 4L32 11Q47 12 47 19Q48 24 41 31L56 19Q47 28 46 38L45 51H23L16 48L14 34L5 12Z" fill="#b5e061" stroke="#000" strokeWidth="1.500" />
      <circle cx="18" cy="21" r="16.500" fill="#b5e061" stroke="#000" strokeWidth="2" />
      <path d="M11 15H20V19H26V28H11Z" fill="#f89a42" stroke="#8a6d1c" strokeWidth="1" />
      <path d="M31 32L55 54" stroke="#000" strokeWidth="3" strokeLinecap="round" />
      <circle cx="31" cy="32" r="2.500" />
    </>
  );
}

const DARK = "#4a5866";

export default function App() {
  return (
    <Screen>
      <GlobalStyle />
      <TabStrip>
        <TabGroup>
          <Tab>
            <TabShape width="236" height="30" viewBox="0 0 236 30" aria-hidden="true">
              <path d="M0 30V29.500C8 29 11 25 13 17C15 8 17 2.500 24 2.500H214C222 2.500 224 8 226 16C228 25 230 29.500 236 29.500V30Z" fill="#e9f2fb" />
              <path d="M0 29.500C8 29 11 25 13 17C15 8 17 2.500 24 2.500H214C222 2.500 224 8 226 16C228 25 230 29.500 236 29.500" fill="none" stroke="#8095a8" />
            </TabShape>
            <TabIcon width="16" height="16" viewBox="0 0 58 56" aria-hidden="true"><LogoArt /></TabIcon>
            <TabTitle>http://localh...80/MapStudy/</TabTitle>
            <TabClose aria-label="Close tab">
              <svg width="8" height="8" viewBox="0 0 8 8" stroke="#76828e" strokeWidth="2.200"><path d="M1 1L7 7M7 1L1 7" /></svg>
            </TabClose>
          </Tab>
          <NewTab aria-label="New tab">
            <svg width="11" height="11" viewBox="0 0 11 11" stroke="#3d4b59" strokeWidth="2"><path d="M5.500 0V11M0 5.500H11" /></svg>
          </NewTab>
        </TabGroup>
        <WindowControls>
          <WindowButton aria-label="Minimize">
            <svg width="12" height="12" viewBox="0 0 12 12"><rect x="1" y="6.500" width="10" height="3.500" fill="#fff" stroke="#445" strokeWidth=".8" /></svg>
          </WindowButton>
          <WindowButton aria-label="Restore">
            <svg width="12" height="12" viewBox="0 0 12 12" fill="none" stroke="#fff" strokeWidth="1.500"><path d="M3.500 2.500V1H11V8.500H9.500M1.500 3.500H8.500V10.500H1.500ZM4 6H6V8H4Z" /></svg>
          </WindowButton>
          <WindowButton $wide aria-label="Close">
            <svg width="12" height="12" viewBox="0 0 12 12" stroke="#fff" strokeWidth="2.600"><path d="M2 2L10 10M10 2L2 10" /></svg>
          </WindowButton>
        </WindowControls>
      </TabStrip>
      <NavBar>
        <BackButton aria-label="Back">
          <svg width="16" height="16" viewBox="0 0 16 16" fill="none" stroke="#3f4e5c" strokeWidth="3"><path d="M15 8H3M8.500 1.500L2.500 8L8.500 14.500" /></svg>
        </BackButton>
        <Field $grow>
          <svg width="14" height="14" viewBox="0 0 14 14" aria-hidden="true">
            <circle cx="7" cy="7" r="6.500" fill="#a9a9a9" />
            <path d="M1.500 5L4 2L8 1.500L7 4L9 6L7 8L4.500 7L3 8.500ZM9 8L12 7L12.500 9L10 12L8 12.500ZM3 10L5 10.500L5.500 12.500Z" fill="#e6e6e6" />
          </svg>
          <AddressInput aria-label="Address" defaultValue="localhost:8080/MapStudy/" />
          <Reload aria-label="Reload">
            <svg width="12" height="12" viewBox="0 0 12 12" fill="none" stroke="#8796a5" strokeWidth="1.800"><path d="M9.500 8.500A4.300 4.300 0 1 1 9.500 3.500" /><path d="M11 .8V5.500H6.500Z" fill="#8796a5" stroke="none" /></svg>
          </Reload>
        </Field>
        <Field>
          <svg width="14" height="14" viewBox="0 0 14 14" fill="none" stroke="#8e8e8e" aria-hidden="true"><circle cx="5.500" cy="5.500" r="4.300" strokeWidth="1.700" /><path d="M8.500 8.500L13 13" strokeWidth="2.400" /></svg>
          <SearchInput aria-label="Search" placeholder="Search" />
        </Field>
        <NavButtons>
          <NavButton $w={31} $rule={16} aria-label="Bookmark">
            <svg width="16" height="16" viewBox="0 0 16 16" fill="none" stroke={DARK} strokeWidth="1.900"><path d="M8 1.500L10 6L14.700 6.500L11.200 9.700L12.200 14.300L8 12L3.800 14.300L4.800 9.700L1.300 6.500L6 6Z" /></svg>
          </NavButton>
          <NavButton $w={30} aria-label="Bookmarks list">
            <svg width="14" height="16" viewBox="0 0 14 16" fill="none" stroke={DARK} strokeWidth="1.800"><path d="M1 3.500H13V14.500H1ZM4.500 3V1H9.500V3M3 7H5M6 7H11.500M3 9.500H5M6 9.500H11.500M3 12H5M6 12H11.500" /></svg>
          </NavButton>
          <NavButton $w={42} aria-label="Downloads">
            <svg width="14" height="16" viewBox="0 0 14 16" fill={DARK}><path d="M4.500 1H9.500V8H13.500L7 15L.5 8H4.500Z" /></svg>
          </NavButton>
          <NavButton $w={30} aria-label="Home">
            <svg width="16" height="16" viewBox="0 0 16 16" fill={DARK}><path d="M8 1L16 8.500L15 9.500L8 3.200L1 9.500L0 8.500Z" /><path d="M8 4.800L13.500 9.800V15H9.500V10.500H6.500V15H2.500V9.800Z" /></svg>
          </NavButton>
          <NavButton $w={36} $rule={16} aria-label="Firebug">
            <svg width="16" height="14" viewBox="0 0 16 14"><path d="M5 5Q9 0 15 2Q13 6 8 7Z" fill="#b9bcbf" /><path d="M8 8Q13 7 14 10Q10 11 7 9Z" fill="#c5c8ca" /><ellipse cx="5" cy="7" rx="3" ry="2.500" fill="#555" /><path d="M2 4L4 6M1 8H4M3 11L5 9M8 11L7 9M10 4L7 6" stroke="#777" /></svg>
          </NavButton>
          <NavButton $w={26} $rule={39} aria-label="More">
            <svg width="8" height="5" viewBox="0 0 8 5"><path d="M0 0H8L4 4.500Z" fill="#333" /></svg>
          </NavButton>
          <NavButton $w={44} aria-label="Menu">
            <svg width="16" height="14" viewBox="0 0 16 14" stroke={DARK} strokeWidth="2.800" strokeLinecap="round"><path d="M1.500 2H14.500M1.500 7H14.500M1.500 12H14.500" /></svg>
          </NavButton>
        </NavButtons>
      </NavBar>
      <Page>
        <Header>
          <Title>MapStudy Template</Title>
          <Logo width="58" height="56" viewBox="0 0 58 56" role="img" aria-label="MapStudy logo"><LogoArt /></Logo>
        </Header>
        <Main>
          <MapPane>
            <MapFrame>
              <WisconsinMap />
              <Toolbar>
                {toolIcons.map((t) => (
                  <Tool key={t.label} type="button" $active={t.active} aria-label={t.label}>{t.icon}</Tool>
                ))}
              </Toolbar>
              <Panel>
                <PanelHead>
                  <ReexpressIcon />
                  <PanelTitle>reexpress</PanelTitle>
                </PanelHead>
                <PanelSubtitle>Population Density</PanelSubtitle>
                {["isarithmic", "proportional symbol", "choropleth"].map((kind) => (
                  <Option key={kind}>
                    <Radio type="radio" name="technique" value={kind} defaultChecked={kind === "choropleth"} />
                    <Thumb kind={kind} />
                    <span>{kind}</span>
                  </Option>
                ))}
              </Panel>
              <LegendButton type="button">
                <svg width="27" height="22" viewBox="0 0 27 22" fill={GREY} aria-hidden="true">
                  <path d="M3 0L6 5H0ZM.3 8.300H5.700V13.700H.3Z" /><circle cx="3" cy="19" r="2.800" />
                  <path d="M8.500 3H27M8.500 11H27M8.500 19H27" stroke={GREY} strokeWidth="1.200" />
                </svg>
                <span>Legend</span>
              </LegendButton>
              <Attribution>
                <a href="#leaflet">Leaflet</a> | Map by <a href="#stamen">Stamen</a>, data by <a href="#osm">OpenStreetMap contributors</a>
              </Attribution>
            </MapFrame>
          </MapPane>
          <Divider />
          <Questions><p>I'm gonna be a bunch of questions!</p></Questions>
        </Main>
        <Footer>I'm some credits, maybe a Twitter or Facebook share button.</Footer>
      </Page>
    </Screen>
  );
}
